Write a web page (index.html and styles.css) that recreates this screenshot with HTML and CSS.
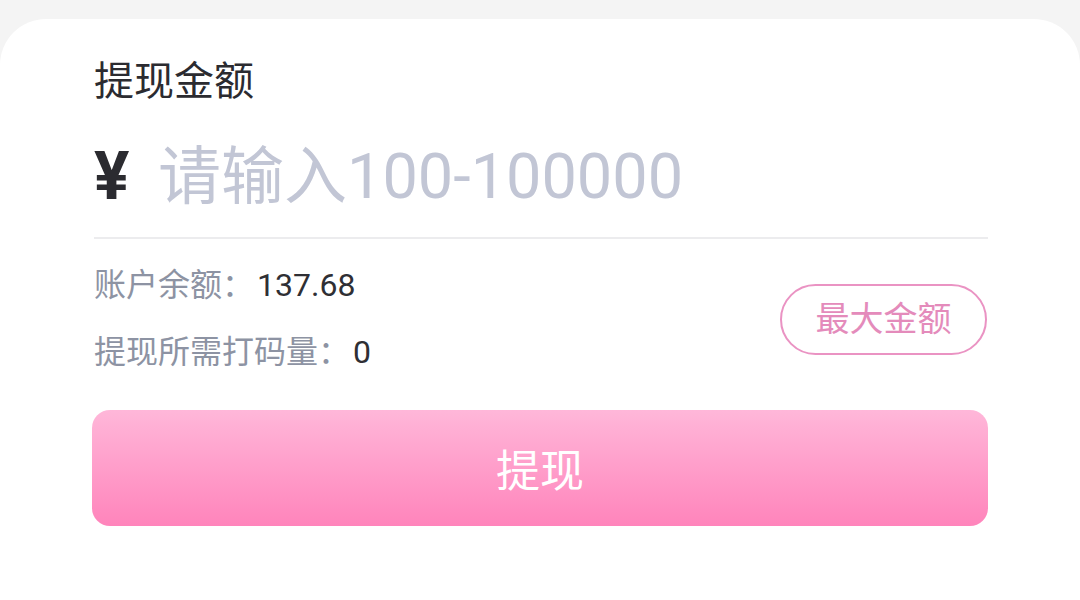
FILE: index.html
```html
<!DOCTYPE html>
<html lang="zh-CN">
<head>
<meta charset="utf-8">
<title>提现</title>
<link rel="stylesheet" href="styles.css">
</head>
<body>
<div class="card">
  <div class="title">提现金额</div>
  <div class="amount-row">
    <span class="yen">¥</span>
    <input class="amount-input" type="text" placeholder="请输入100-100000">
  </div>
  <div class="info-row">
    <div class="info-list">
      <div class="info-line"><span class="label">账户余额：</span><span class="value">137.68</span></div>
      <div class="info-line"><span class="label">提现所需打码量：</span><span class="value">0</span></div>
    </div>
    <button class="max-btn" type="button">最大金额</button>
  </div>
  <button class="submit-btn" type="button">提现</button>
</div>
</body>
</html>
```
FILE: styles.css
```css
html, body {
  margin: 0;
  padding: 0;
  background: #f4f4f4;
  height: 100%;
}
body {
  font-family: "Roboto", "Noto Sans CJK SC", sans-serif;
  overflow: hidden;
}
.card {
  margin-top: 19px;
  background: #ffffff;
  border-radius: 46px 46px 0 0;
  padding: 39px 92px 0 94px;
  height: 600px;
  box-sizing: border-box;
}
.title {
  font-size: 40px;
  line-height: 48px;
  color: #2b2b30;
}
.amount-row {
  margin-top: 34px;
  display: flex;
  align-items: center;
  padding-bottom: 23px;
  border-bottom: 2px solid #ececee;
}
.yen {
  font-size: 66px;
  line-height: 74px;
  font-weight: 700;
  color: #2b2b30;
  width: 64px;
  flex: none;
}
.amount-input {
  flex: 1;
  min-width: 0;
  border: none;
  outline: none;
  padding: 0;
  margin: 0;
  background: transparent;
  font-family: "Roboto", "Noto Sans CJK SC", sans-serif;
  font-size: 63px;
  line-height: 74px;
  height: 74px;
  color: #2b2b30;
}
.amount-input::placeholder {
  color: #c2c6d5;
}
.info-row {
  margin-top: 13px;
  display: flex;
  align-items: center;
  justify-content: space-between;
}
.info-line {
  font-size: 32px;
  line-height: 67px;
}
.label {
  color: #8d93a3;
  margin-right: 3px;
}
.value {
  color: #2f2f34;
}
.max-btn {
  font-family: "Roboto", "Noto Sans CJK SC", sans-serif;
  font-size: 34px;
  line-height: 40px;
  color: #e48bbb;
  background: #ffffff;
  border: 2.5px solid #ea93c3;
  border-radius: 40px;
  width: 207px;
  height: 71px;
  padding: 0;
  margin-right: 1px;
}
.submit-btn {
  display: block;
  width: calc(100% + 2px);
  margin: 24px 0 0 -2px;
  height: 116px;
  border: none;
  border-radius: 18px;
  background: linear-gradient(180deg, #ffb7d9 0%, #ff84bb 100%);
  color: #ffffff;
  font-family: "Roboto", "Noto Sans CJK SC", sans-serif;
  font-size: 44px;
  padding: 0;
}
```
